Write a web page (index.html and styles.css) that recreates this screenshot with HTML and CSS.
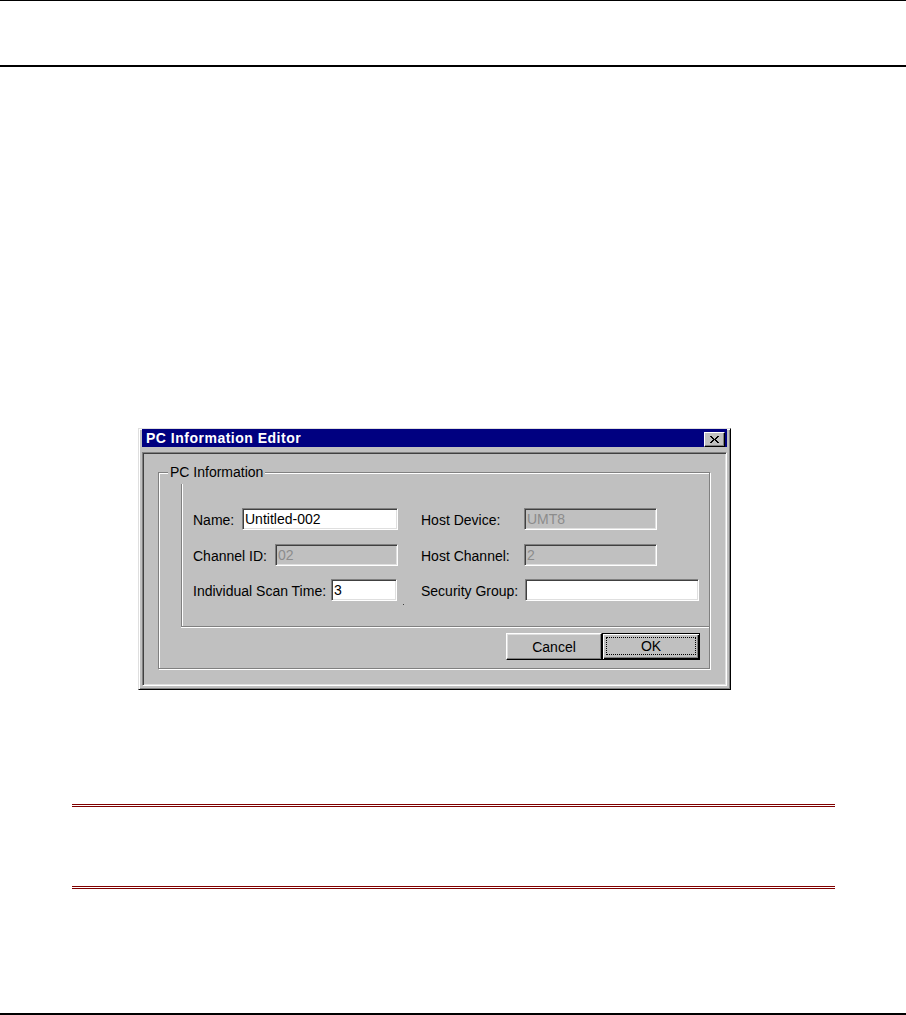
FILE: index.html
```html
<!DOCTYPE html>
<html>
<head>
<meta charset="utf-8">
<link rel="stylesheet" href="styles.css">
</head>
<body>
<div class="page">
  <div class="rule rule-thin"></div>
  <div class="header"></div>
  <div class="rule rule-thick"></div>

  <div class="figure">
    <div class="window">
      <div class="titlebar">
        <span class="title">PC Information Editor</span>
        <div class="close">
          <svg width="9" height="7" viewBox="0 0 9 7"><path fill="#000" d="M0 0h2v1H0z M7 0h2v1H7z M1 1h2v1H1z M6 1h2v1H6z M2 2h2v1H2z M5 2h2v1H5z M3 3h3v1H3z M2 4h2v1H2z M5 4h2v1H5z M1 5h2v1H1z M6 5h2v1H6z M0 6h2v1H0z M7 6h2v1H7z"/></svg>
        </div>
      </div>
      <div class="client">
        <div class="groupbox">
          <span class="legend">PC Information</span>
          <div class="frame">
            <div class="cell left">
              <span class="label">Name:</span>
              <div class="textbox w-name">Untitled-002</div>
            </div>
            <div class="cell right">
              <span class="label">Host Device:</span>
              <div class="textbox disabled w-host">UMT8</div>
            </div>
            <div class="cell left">
              <span class="label">Channel ID:</span>
              <div class="textbox disabled w-chan">02</div>
            </div>
            <div class="cell right">
              <span class="label">Host Channel:</span>
              <div class="textbox disabled w-host">2</div>
            </div>
            <div class="cell left">
              <span class="label">Individual Scan Time:</span>
              <div class="textbox w-scan">3</div>
              <span class="dot"></span>
            </div>
            <div class="cell right">
              <span class="label">Security Group:</span>
              <div class="textbox w-sec"></div>
            </div>
          </div>
          <div class="buttons">
            <div class="btn">Cancel</div>
            <div class="btn default"><span class="focus">OK</span></div>
          </div>
        </div>
      </div>
    </div>
  </div>

  <div class="note"></div>
  <div class="rule rule-thick footer-rule"></div>
</div>
</body>
</html>
```

FILE: styles.css
```css
html, body {
  margin: 0;
  padding: 0;
  background: #fff;
}
body {
  font-family: "Liberation Sans", Arial, sans-serif;
  color: #000;
}
.page {
  width: 906px;
  height: 1015px;
  display: flex;
  flex-direction: column;
  overflow: hidden;
}
.rule {
  background: #000;
  flex: none;
}
.rule-thin { height: 1px; }
.rule-thick { height: 2px; }
.header { height: 64px; flex: none; }

.figure {
  padding: 361px 0 0 138px;
  flex: none;
}
.window {
  width: 593px;
  height: 262px;
  box-sizing: border-box;
  background: #c0c0c0;
  border: 1px solid;
  border-color: #dfdfdf #000 #000 #dfdfdf;
  box-shadow: inset 1px 1px #fff, inset -1px -1px #808080;
  padding: 0 3px 3px 3px;
  display: flex;
  flex-direction: column;
}
.titlebar {
  height: 18px;
  flex: none;
  background: #000080;
  display: flex;
  align-items: center;
  justify-content: space-between;
  padding: 0 2px 0 4px;
}
.title {
  color: #fff;
  font-weight: bold;
  font-size: 14px;
  letter-spacing: 0.5px;
  line-height: 18px;
  white-space: nowrap;
}
.close {
  align-self: flex-end;
  width: 21px;
  height: 15px;
  box-sizing: border-box;
  background: #c0c0c0;
  border: 1px solid;
  border-color: #fff #000 #000 #fff;
  box-shadow: inset -1px -1px #808080;
  display: flex;
  align-items: center;
  justify-content: center;
}
.close svg { display: block; }

.client {
  flex: 1;
  margin-top: 5px;
  border: 1px solid;
  border-color: #808080 #fff #fff #808080;
  box-shadow: inset 1px 1px #404040, inset -1px -1px #dfdfdf;
  padding: 19px 0 0 15px;
}
.groupbox {
  position: relative;
  width: 552px;
  height: 197px;
  box-sizing: border-box;
  border: 1px solid #808080;
  box-shadow: inset 1px 1px #fff, 1px 1px #fff;
  display: flex;
  flex-direction: column;
}
.legend {
  position: absolute;
  left: 9px;
  top: -9px;
  padding: 0 2px;
  background: #c0c0c0;
  font-size: 14px;
  line-height: 16px;
  white-space: nowrap;
}
.frame {
  margin: 11px 0 0 22px;
  border-left: 1px solid #808080;
  border-bottom: 1px solid #808080;
  box-shadow: inset 1px 0 #fff, 0 1px #fff;
  padding: 24px 0 25px 11px;
  display: grid;
  grid-template-columns: 205px 278px;
  grid-auto-rows: 22px;
  column-gap: 23px;
  row-gap: 13.5px;
}
.cell {
  display: flex;
  align-items: center;
  position: relative;
}
.cell.left { justify-content: space-between; }
.label {
  font-size: 14px;
  white-space: nowrap;
  padding-top: 2px;
}
.right .label {
  width: 103px;
  flex: none;
}
.textbox {
  height: 22px;
  box-sizing: border-box;
  border: 1px solid;
  border-color: #808080 #fff #fff #808080;
  box-shadow: inset 1px 1px #404040, inset -1px -1px #dfdfdf;
  background: #fff;
  font-size: 14px;
  line-height: 20px;
  padding-left: 2px;
  white-space: nowrap;
  overflow: hidden;
}
.textbox.disabled {
  background: #c0c0c0;
  color: #8c8c8c;
}
.w-name { width: 156px; }
.w-chan { width: 123px; }
.w-scan { width: 66px; margin-right: 1px; }
.w-host { width: 133px; }
.w-sec { width: 174px; margin-left: 1px; }
.dot {
  position: absolute;
  right: -6px;
  top: 25px;
  width: 1px;
  height: 1px;
  background: #404040;
}

.buttons {
  display: flex;
  justify-content: flex-end;
  margin-top: 6px;
  padding-right: 9px;
}
.btn {
  width: 96px;
  height: 27px;
  box-sizing: border-box;
  border: 1px solid;
  border-color: #fff #000 #000 #fff;
  box-shadow: inset -1px -1px #808080, inset 1px 1px #dfdfdf;
  display: flex;
  align-items: center;
  justify-content: center;
  font-size: 14px;
}
.btn.default {
  width: 98px;
  border: 1px solid #000;
  box-shadow: inset 1px 1px #fff, inset -1px -1px #000, inset -2px -2px #808080;
  padding: 3px 3px 4px 3px;
  align-items: stretch;
}
.focus {
  flex: 1;
  display: flex;
  align-items: center;
  justify-content: center;
  border: 1px dotted #000;
}

.note {
  flex: none;
  margin: 114px 0 0 72px;
  width: 763px;
  height: 85px;
  box-sizing: border-box;
  border-top: 3px double #800000;
  border-bottom: 3px double #800000;
}
.footer-rule {
  margin-top: 124px;
}
```
